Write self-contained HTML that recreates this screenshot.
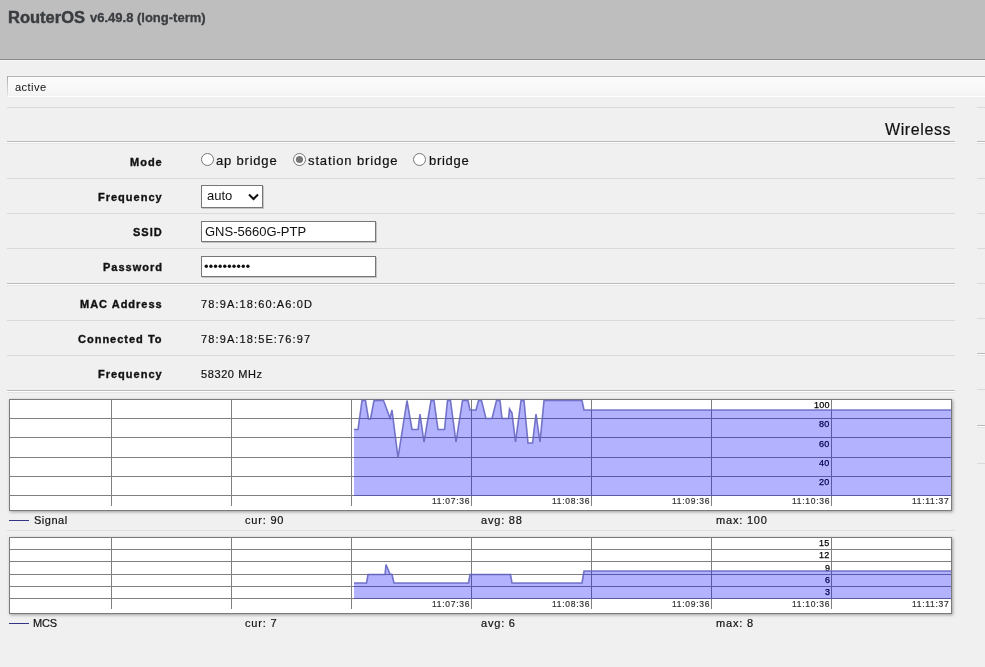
<!DOCTYPE html><html><head><meta charset="utf-8"><style>
html,body{margin:0;padding:0;}
body{width:985px;height:667px;overflow:hidden;background:#f0f0f0;position:relative;font-family:"Liberation Sans", sans-serif;}
.t{position:absolute;white-space:nowrap;will-change:transform;}
svg{position:absolute;left:0;top:0;}
</style></head><body><svg width="985" height="667" viewBox="0 0 985 667" shape-rendering="auto"><rect x="0" y="0" width="985" height="59" fill="#bebebe"/><rect x="0" y="59" width="985" height="1" fill="#8a8a8a"/><rect x="0" y="60" width="985" height="1" fill="#f8f8f8"/><defs><linearGradient id="sg" x1="0" y1="0" x2="0" y2="1"><stop offset="0" stop-color="#fbfbfb"/><stop offset="0.6" stop-color="#f9f9f9"/><stop offset="1" stop-color="#f3f3f3"/></linearGradient><linearGradient id="lg" x1="0" y1="0" x2="0" y2="1"><stop offset="0" stop-color="#a8a8a8"/><stop offset="1" stop-color="#e8e8e8"/></linearGradient></defs><rect x="7" y="76" width="978" height="20" fill="url(#sg)"/><rect x="7" y="96" width="978" height="1" fill="#ffffff"/><rect x="7" y="76" width="978" height="1" fill="#b4b4b4"/><rect x="7" y="76" width="1" height="21" fill="url(#lg)"/><rect x="7" y="107" width="948" height="1" fill="#dadada"/><rect x="7" y="178" width="948" height="1" fill="#dadada"/><rect x="7" y="213" width="948" height="1" fill="#dadada"/><rect x="7" y="248" width="948" height="1" fill="#dadada"/><rect x="7" y="320" width="948" height="1" fill="#dadada"/><rect x="7" y="355" width="948" height="1" fill="#dadada"/><rect x="7" y="141" width="948" height="1" fill="#b9b9b9"/><rect x="7" y="142" width="948" height="1" fill="#ffffff"/><rect x="7" y="143" width="948" height="1" fill="#e4e4e4"/><rect x="7" y="283" width="948" height="1" fill="#b9b9b9"/><rect x="7" y="284" width="948" height="1" fill="#ffffff"/><rect x="7" y="285" width="948" height="1" fill="#e4e4e4"/><rect x="7" y="390" width="948" height="1" fill="#b9b9b9"/><rect x="7" y="391" width="948" height="1" fill="#ffffff"/><rect x="7" y="392" width="948" height="1" fill="#e4e4e4"/><rect x="977" y="107" width="8" height="1" fill="#dadada"/><rect x="977" y="178" width="8" height="1" fill="#dadada"/><rect x="977" y="213" width="8" height="1" fill="#dadada"/><rect x="977" y="248" width="8" height="1" fill="#dadada"/><rect x="977" y="283" width="8" height="1" fill="#dadada"/><rect x="977" y="318" width="8" height="1" fill="#dadada"/><rect x="977" y="389" width="8" height="1" fill="#dadada"/><rect x="977" y="463" width="8" height="1" fill="#dadada"/><rect x="977" y="141" width="8" height="1" fill="#b9b9b9"/><rect x="977" y="142" width="8" height="1" fill="#ffffff"/><rect x="977" y="143" width="8" height="1" fill="#e4e4e4"/><rect x="977" y="353" width="8" height="1" fill="#b9b9b9"/><rect x="977" y="354" width="8" height="1" fill="#ffffff"/><rect x="977" y="355" width="8" height="1" fill="#e4e4e4"/><rect x="977" y="425" width="8" height="1" fill="#b9b9b9"/><rect x="977" y="426" width="8" height="1" fill="#ffffff"/><rect x="977" y="427" width="8" height="1" fill="#e4e4e4"/></svg><div style="position:absolute;left:9px;top:399px;width:941px;height:110px;border:1px solid #7a7a7a;background:#fff;box-shadow:1px 1px 3px rgba(0,0,0,0.35);"></div><div style="position:absolute;left:9px;top:537px;width:941px;height:75px;border:1px solid #7a7a7a;background:#fff;box-shadow:1px 1px 3px rgba(0,0,0,0.35);"></div><svg width="985" height="667" viewBox="0 0 985 667" shape-rendering="auto"><rect x="9" y="418" width="942" height="1" fill="#808080"/><rect x="9" y="437" width="942" height="1" fill="#808080"/><rect x="9" y="457" width="942" height="1" fill="#808080"/><rect x="9" y="476" width="942" height="1" fill="#808080"/><rect x="9" y="495" width="942" height="1" fill="#808080"/><rect x="111" y="399" width="1" height="107" fill="#808080"/><rect x="231" y="399" width="1" height="107" fill="#808080"/><rect x="351" y="399" width="1" height="107" fill="#808080"/><rect x="471" y="399" width="1" height="107" fill="#808080"/><rect x="591" y="399" width="1" height="107" fill="#808080"/><rect x="711" y="399" width="1" height="107" fill="#808080"/><rect x="831" y="399" width="1" height="107" fill="#808080"/><rect x="9" y="549" width="942" height="1" fill="#808080"/><rect x="9" y="561" width="942" height="1" fill="#808080"/><rect x="9" y="574" width="942" height="1" fill="#808080"/><rect x="9" y="586" width="942" height="1" fill="#808080"/><rect x="9" y="598" width="942" height="1" fill="#808080"/><rect x="111" y="537" width="1" height="72" fill="#808080"/><rect x="231" y="537" width="1" height="72" fill="#808080"/><rect x="351" y="537" width="1" height="72" fill="#808080"/><rect x="471" y="537" width="1" height="72" fill="#808080"/><rect x="591" y="537" width="1" height="72" fill="#808080"/><rect x="711" y="537" width="1" height="72" fill="#808080"/><rect x="831" y="537" width="1" height="72" fill="#808080"/><rect x="9" y="520" width="20" height="1" fill="#333388"/><rect x="9" y="623" width="20" height="1" fill="#333388"/><rect x="7" y="530" width="948" height="1" fill="#dedede"/><circle cx="207.5" cy="159.5" r="6" fill="#ffffff" stroke="#767676" stroke-width="1"/><circle cx="299.5" cy="159.5" r="6" fill="#ffffff" stroke="#767676" stroke-width="1"/><circle cx="299.5" cy="159.5" r="3.6" fill="#767676"/><circle cx="419.5" cy="159.5" r="6" fill="#ffffff" stroke="#767676" stroke-width="1"/><rect x="202" y="186" width="62" height="23" fill="#c4c4c4"/><rect x="201" y="185" width="62" height="23" fill="#767676"/><rect x="202" y="186" width="60" height="21" fill="#ffffff"/><rect x="202" y="222" width="175" height="21" fill="#c4c4c4"/><rect x="201" y="221" width="175" height="21" fill="#767676"/><rect x="202" y="222" width="173" height="19" fill="#ffffff"/><rect x="202" y="257" width="175" height="21" fill="#c4c4c4"/><rect x="201" y="256" width="175" height="21" fill="#767676"/><rect x="202" y="257" width="173" height="19" fill="#ffffff"/><polyline points="249,194.5 253.5,199 258,194.5" fill="none" stroke="#111" stroke-width="2"/><circle cx="206.3" cy="266.3" r="1.7" fill="#111"/><circle cx="210.92000000000002" cy="266.3" r="1.7" fill="#111"/><circle cx="215.54000000000002" cy="266.3" r="1.7" fill="#111"/><circle cx="220.16000000000003" cy="266.3" r="1.7" fill="#111"/><circle cx="224.78" cy="266.3" r="1.7" fill="#111"/><circle cx="229.4" cy="266.3" r="1.7" fill="#111"/><circle cx="234.02" cy="266.3" r="1.7" fill="#111"/><circle cx="238.64000000000001" cy="266.3" r="1.7" fill="#111"/><circle cx="243.26000000000002" cy="266.3" r="1.7" fill="#111"/><circle cx="247.88" cy="266.3" r="1.7" fill="#111"/></svg><div class="t" style="top:6.56px;font-size:16.5px;line-height:21.45px;color:#3a3d40;font-weight:bold;left:8.00px;-webkit-text-stroke:0.45px #3a3d40;">RouterOS</div>
<div class="t" style="top:10.25px;font-size:13px;line-height:16.9px;color:#3a3d40;font-weight:bold;left:89.50px;-webkit-text-stroke:0.3px #3a3d40;">v6.49.8 (long-term)</div>
<div class="t" style="top:79.84px;font-size:11.2px;line-height:14.56px;color:#111;letter-spacing:0.4px;left:14.50px;">active</div>
<div class="t" style="top:120.26px;font-size:16px;line-height:20.8px;color:#111;letter-spacing:0.6px;right:33.40px;text-align:right;-webkit-text-stroke:0.2px #111;">Wireless</div>
<div class="t" style="top:154.84px;font-size:11px;line-height:14.3px;color:#111;font-weight:bold;letter-spacing:1.0px;right:822.40px;text-align:right;-webkit-text-stroke:0.35px #111;">Mode</div>
<div class="t" style="top:189.84px;font-size:11px;line-height:14.3px;color:#111;font-weight:bold;letter-spacing:1.0px;right:822.40px;text-align:right;-webkit-text-stroke:0.35px #111;">Frequency</div>
<div class="t" style="top:224.84px;font-size:11px;line-height:14.3px;color:#111;font-weight:bold;letter-spacing:1.0px;right:822.40px;text-align:right;-webkit-text-stroke:0.35px #111;">SSID</div>
<div class="t" style="top:259.84px;font-size:11px;line-height:14.3px;color:#111;font-weight:bold;letter-spacing:1.0px;right:822.40px;text-align:right;-webkit-text-stroke:0.35px #111;">Password</div>
<div class="t" style="top:296.84px;font-size:11px;line-height:14.3px;color:#111;font-weight:bold;letter-spacing:1.0px;right:822.40px;text-align:right;-webkit-text-stroke:0.35px #111;">MAC Address</div>
<div class="t" style="top:331.84px;font-size:11px;line-height:14.3px;color:#111;font-weight:bold;letter-spacing:1.0px;right:822.40px;text-align:right;-webkit-text-stroke:0.35px #111;">Connected To</div>
<div class="t" style="top:366.94px;font-size:11px;line-height:14.3px;color:#111;font-weight:bold;letter-spacing:1.0px;right:822.40px;text-align:right;-webkit-text-stroke:0.35px #111;">Frequency</div>
<div class="t" style="top:153.35px;font-size:13px;line-height:16.9px;color:#111;letter-spacing:0.8px;left:216.30px;-webkit-text-stroke:0.2px #111;">ap bridge</div>
<div class="t" style="top:153.35px;font-size:13px;line-height:16.9px;color:#111;letter-spacing:0.88px;left:308.00px;-webkit-text-stroke:0.2px #111;">station bridge</div>
<div class="t" style="top:153.35px;font-size:13px;line-height:16.9px;color:#111;letter-spacing:0.7px;left:428.60px;-webkit-text-stroke:0.2px #111;">bridge</div>
<div class="t" style="top:188.45px;font-size:13px;line-height:16.9px;color:#111;left:206.80px;">auto</div>
<div class="t" style="top:223.55px;font-size:13px;line-height:16.9px;color:#111;left:204.70px;">GNS-5660G-PTP</div>
<div class="t" style="top:296.84px;font-size:11px;line-height:14.3px;color:#111;letter-spacing:1.12px;left:201.40px;-webkit-text-stroke:0.2px #111;">78:9A:18:60:A6:0D</div>
<div class="t" style="top:331.84px;font-size:11px;line-height:14.3px;color:#111;letter-spacing:1.12px;left:201.40px;-webkit-text-stroke:0.2px #111;">78:9A:18:5E:76:97</div>
<div class="t" style="top:366.94px;font-size:11px;line-height:14.3px;color:#111;letter-spacing:0.6px;left:201.40px;-webkit-text-stroke:0.2px #111;">58320 MHz</div>
<div class="t" style="top:512.84px;font-size:11px;line-height:14.3px;color:#111;letter-spacing:0.5px;left:33.50px;-webkit-text-stroke:0.2px #111;">Signal</div>
<div class="t" style="top:512.84px;font-size:11px;line-height:14.3px;color:#111;letter-spacing:0.8px;left:245.00px;-webkit-text-stroke:0.2px #111;">cur: 90</div>
<div class="t" style="top:512.84px;font-size:11px;line-height:14.3px;color:#111;letter-spacing:0.8px;left:481.00px;-webkit-text-stroke:0.2px #111;">avg: 88</div>
<div class="t" style="top:512.84px;font-size:11px;line-height:14.3px;color:#111;letter-spacing:0.8px;left:716.00px;-webkit-text-stroke:0.2px #111;">max: 100</div>
<div class="t" style="top:615.64px;font-size:11px;line-height:14.3px;color:#111;letter-spacing:-0.15px;left:33.10px;-webkit-text-stroke:0.2px #111;">MCS</div>
<div class="t" style="top:615.64px;font-size:11px;line-height:14.3px;color:#111;letter-spacing:0.8px;left:245.00px;-webkit-text-stroke:0.2px #111;">cur: 7</div>
<div class="t" style="top:615.64px;font-size:11px;line-height:14.3px;color:#111;letter-spacing:0.8px;left:481.00px;-webkit-text-stroke:0.2px #111;">avg: 6</div>
<div class="t" style="top:615.64px;font-size:11px;line-height:14.3px;color:#111;letter-spacing:0.8px;left:716.00px;-webkit-text-stroke:0.2px #111;">max: 8</div>
<div class="t" style="top:400.03px;font-size:9px;line-height:11.7px;color:#000;letter-spacing:0.3px;right:155.20px;text-align:right;-webkit-text-stroke:0.25px #000;">100</div>
<div class="t" style="top:419.03px;font-size:9px;line-height:11.7px;color:#000;letter-spacing:0.3px;right:155.20px;text-align:right;-webkit-text-stroke:0.25px #000;">80</div>
<div class="t" style="top:438.53px;font-size:9px;line-height:11.7px;color:#000;letter-spacing:0.3px;right:155.20px;text-align:right;-webkit-text-stroke:0.25px #000;">60</div>
<div class="t" style="top:457.53px;font-size:9px;line-height:11.7px;color:#000;letter-spacing:0.3px;right:155.20px;text-align:right;-webkit-text-stroke:0.25px #000;">40</div>
<div class="t" style="top:477.03px;font-size:9px;line-height:11.7px;color:#000;letter-spacing:0.3px;right:155.20px;text-align:right;-webkit-text-stroke:0.25px #000;">20</div>
<div class="t" style="top:538.03px;font-size:9px;line-height:11.7px;color:#000;letter-spacing:0.3px;right:155.20px;text-align:right;-webkit-text-stroke:0.25px #000;">15</div>
<div class="t" style="top:550.03px;font-size:9px;line-height:11.7px;color:#000;letter-spacing:0.3px;right:155.20px;text-align:right;-webkit-text-stroke:0.25px #000;">12</div>
<div class="t" style="top:562.53px;font-size:9px;line-height:11.7px;color:#000;letter-spacing:0.3px;right:155.20px;text-align:right;-webkit-text-stroke:0.25px #000;">9</div>
<div class="t" style="top:575.03px;font-size:9px;line-height:11.7px;color:#000;letter-spacing:0.3px;right:155.20px;text-align:right;-webkit-text-stroke:0.25px #000;">6</div>
<div class="t" style="top:587.03px;font-size:9px;line-height:11.7px;color:#000;letter-spacing:0.3px;right:155.20px;text-align:right;-webkit-text-stroke:0.25px #000;">3</div>
<div class="t" style="top:495.53px;font-size:8.5px;line-height:11.05px;color:#333;letter-spacing:0.7px;right:515.30px;text-align:right;-webkit-text-stroke:0.2px #333;">11:07:36</div>
<div class="t" style="top:495.53px;font-size:8.5px;line-height:11.05px;color:#333;letter-spacing:0.7px;right:395.30px;text-align:right;-webkit-text-stroke:0.2px #333;">11:08:36</div>
<div class="t" style="top:495.53px;font-size:8.5px;line-height:11.05px;color:#333;letter-spacing:0.7px;right:275.30px;text-align:right;-webkit-text-stroke:0.2px #333;">11:09:36</div>
<div class="t" style="top:495.53px;font-size:8.5px;line-height:11.05px;color:#333;letter-spacing:0.7px;right:155.30px;text-align:right;-webkit-text-stroke:0.2px #333;">11:10:36</div>
<div class="t" style="top:495.53px;font-size:8.5px;line-height:11.05px;color:#333;letter-spacing:0.7px;right:35.30px;text-align:right;-webkit-text-stroke:0.2px #333;">11:11:37</div>
<div class="t" style="top:598.53px;font-size:8.5px;line-height:11.05px;color:#333;letter-spacing:0.7px;right:515.30px;text-align:right;-webkit-text-stroke:0.2px #333;">11:07:36</div>
<div class="t" style="top:598.53px;font-size:8.5px;line-height:11.05px;color:#333;letter-spacing:0.7px;right:395.30px;text-align:right;-webkit-text-stroke:0.2px #333;">11:08:36</div>
<div class="t" style="top:598.53px;font-size:8.5px;line-height:11.05px;color:#333;letter-spacing:0.7px;right:275.30px;text-align:right;-webkit-text-stroke:0.2px #333;">11:09:36</div>
<div class="t" style="top:598.53px;font-size:8.5px;line-height:11.05px;color:#333;letter-spacing:0.7px;right:155.30px;text-align:right;-webkit-text-stroke:0.2px #333;">11:10:36</div>
<div class="t" style="top:598.53px;font-size:8.5px;line-height:11.05px;color:#333;letter-spacing:0.7px;right:35.30px;text-align:right;-webkit-text-stroke:0.2px #333;">11:11:37</div>
<svg width="985" height="667" viewBox="0 0 985 667"><polygon points="354,496 354,429.5 358,429.5 362,400.5 365.5,400.5 368.5,419 370.5,419 374,400.5 383.5,400.5 390,418 392,410 398,457.5 407,400.5 412,429.5 418,429.5 420,414 424,442 431,400.5 434,400.5 438,429.5 444.5,429.5 447.5,400.5 450.5,400.5 456,442 462.5,400.5 468,400.5 470,410 476,410 478.5,400.5 481.5,400.5 486,418.5 492,418.5 496.5,400.5 500,400.5 502,418.5 508.5,418.5 509.5,409 512,413 515.5,442 521,400.5 524,400.5 528,443 532.5,443 536,414 540,442 544,400.5 582,400.5 584,410 951,410 951,496" fill="rgb(0,0,255)" fill-opacity="0.3"/><polyline points="354,429.5 358,429.5 362,400.5 365.5,400.5 368.5,419 370.5,419 374,400.5 383.5,400.5 390,418 392,410 398,457.5 407,400.5 412,429.5 418,429.5 420,414 424,442 431,400.5 434,400.5 438,429.5 444.5,429.5 447.5,400.5 450.5,400.5 456,442 462.5,400.5 468,400.5 470,410 476,410 478.5,400.5 481.5,400.5 486,418.5 492,418.5 496.5,400.5 500,400.5 502,418.5 508.5,418.5 509.5,409 512,413 515.5,442 521,400.5 524,400.5 528,443 532.5,443 536,414 540,442 544,400.5 582,400.5 584,410 951,410" fill="none" stroke="#6060c0" stroke-opacity="0.85" stroke-width="1.6" stroke-linejoin="miter"/><polygon points="354,599 354,583 366.5,583 368,574.5 385,574.5 386,564.5 390,574 392,574.5 394,583 468.5,583 470,574.5 510.5,574.5 512,583 582,583 584,571 951,571 951,599" fill="rgb(0,0,255)" fill-opacity="0.3"/><polyline points="354,583 366.5,583 368,574.5 385,574.5 386,564.5 390,574 392,574.5 394,583 468.5,583 470,574.5 510.5,574.5 512,583 582,583 584,571 951,571" fill="none" stroke="#6060c0" stroke-opacity="0.85" stroke-width="1.6" stroke-linejoin="miter"/></svg></body></html>
